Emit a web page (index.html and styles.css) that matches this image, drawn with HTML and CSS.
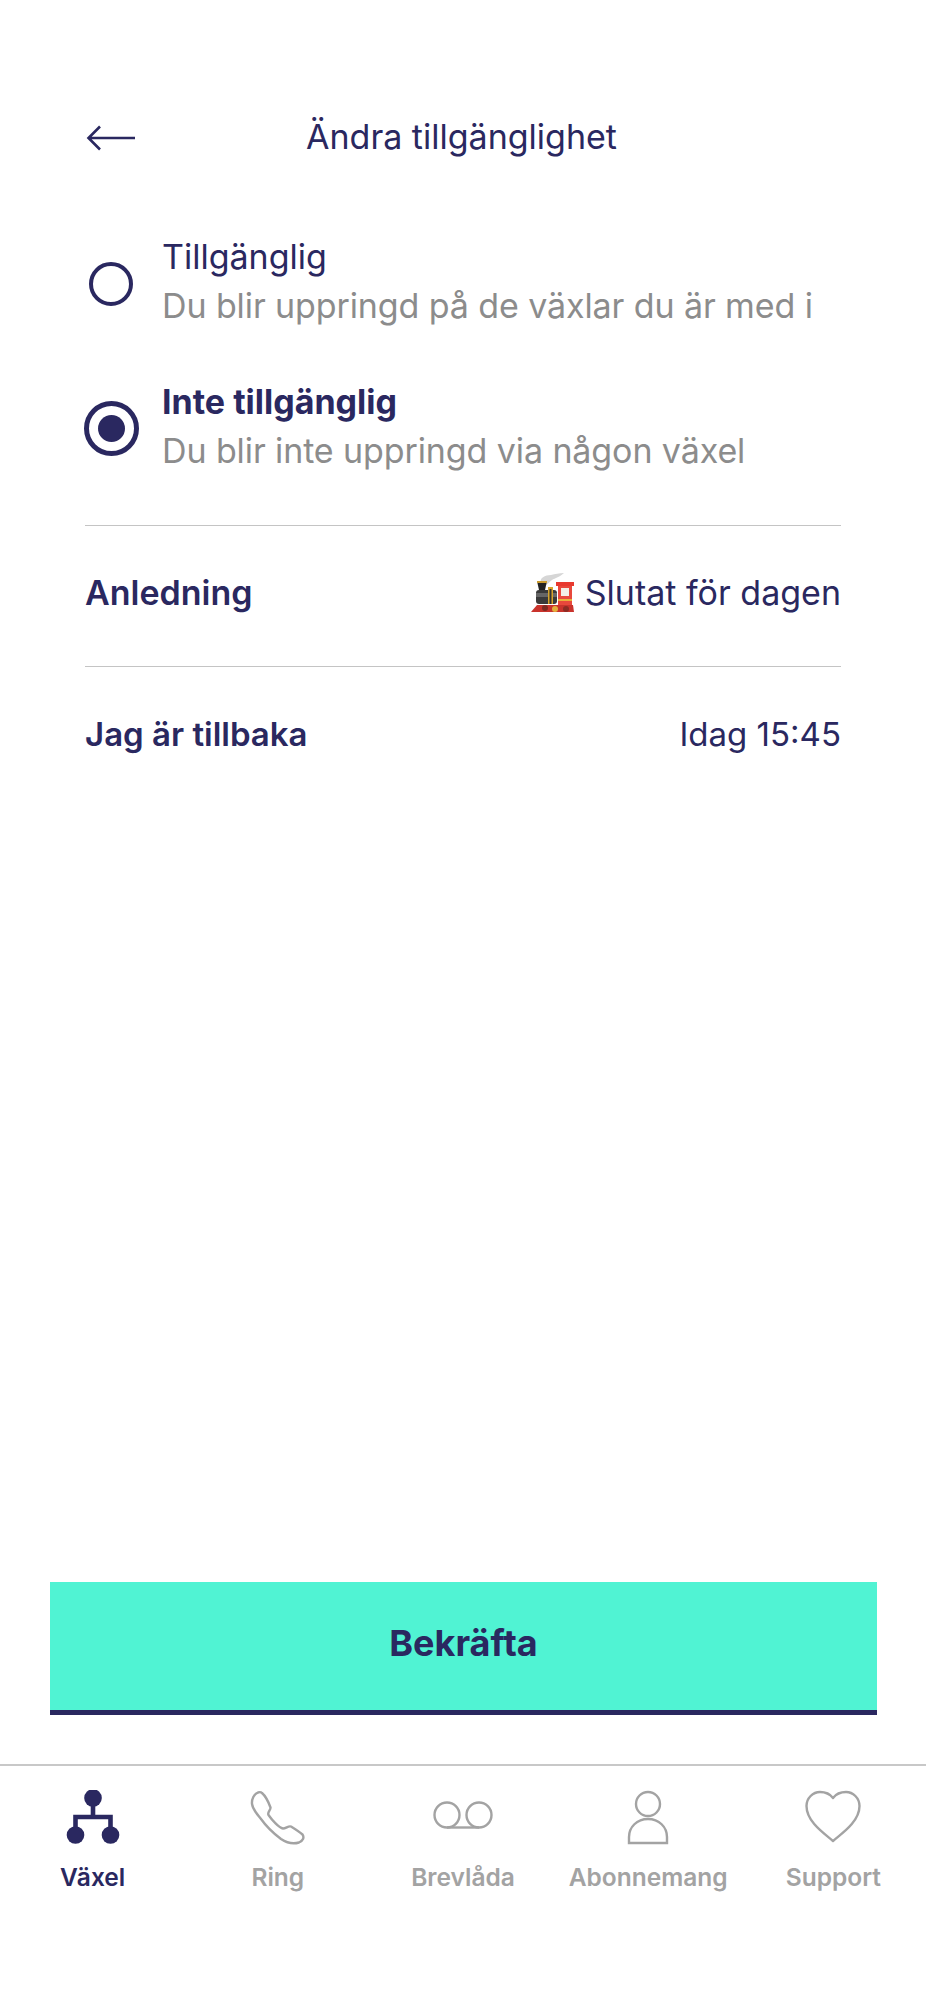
FILE: index.html
```html
<!DOCTYPE html>
<html>
<head>
    <meta charset="UTF-8">
    <title>Ändra tillgänglighet</title>
    <link rel="stylesheet" href="styles.css">
</head>
<body>
    <div class="page">
        <div class="top-bar">
            <svg class="back-icon" width="50" height="26" viewBox="0 0 50 26">
                <path d="M14 1.5 L2.5 13 L14 24.5 M2.5 13 H49" fill="none" stroke="#2a2860" stroke-width="2.6"/>
            </svg>
            <div class="page-title">Ändra tillgänglighet</div>
        </div>

        <div class="options">
            <div class="option option-first">
                <div class="radio-slot"><span class="radio"></span></div>
                <div class="option-text">
                    <div class="option-name">Tillgänglig</div>
                    <div class="option-desc">Du blir uppringd på de växlar du är med i</div>
                </div>
            </div>
            <div class="option">
                <div class="radio-slot"><span class="radio radio-on"></span></div>
                <div class="option-text">
                    <div class="option-name bold">Inte tillgänglig</div>
                    <div class="option-desc">Du blir inte uppringd via någon växel</div>
                </div>
            </div>
        </div>

        <div class="row row-reason">
            <span class="row-label big">Anledning</span>
            <span class="row-value">
                <svg class="train" width="44" height="42" viewBox="0 0 44 42">
                    <path d="M10 11 C8 6 14 3 20 3 C24 2 28 1 33 1 C29 5 24 6 21 8 C18 10 17 12 15 13 Z" fill="#d6d6d6"/>
                    <path d="M6 9 H16 L14 18 H8 Z" fill="#222"/>
                    <rect x="6" y="9" width="10" height="2" fill="#c99a2e"/>
                    <rect x="5" y="18" width="21" height="14" rx="3" fill="#3a3a3a"/>
                    <rect x="5" y="21" width="21" height="4" fill="#666"/>
                    <rect x="17" y="15" width="5" height="17" fill="#d9a52a"/>
                    <rect x="18.5" y="17" width="2" height="15" fill="#333"/>
                    <rect x="25" y="10" width="18" height="4" fill="#e8392f"/>
                    <rect x="27" y="14" width="14" height="21" fill="#e8483c"/>
                    <rect x="30" y="16" width="8" height="8" fill="#f4efe6"/>
                    <rect x="27" y="27" width="14" height="2" fill="#e9b23a"/>
                    <path d="M0 40 L6 33 H42 L43 40 Z" fill="#c9332c"/>
                    <circle cx="14" cy="36" r="3" fill="#7c2a22"/>
                    <circle cx="24" cy="37" r="3" fill="#e4b03c"/>
                    <circle cx="35" cy="37" r="3" fill="#8d2c24"/>
                </svg>
                Slutat för dagen
            </span>
        </div>
        <div class="row row-back">
            <span class="row-label">Jag är tillbaka</span>
            <span class="row-value small">Idag 15:45</span>
        </div>

        <div class="spacer"></div>

        <div class="confirm-wrap">
            <button class="confirm">Bekräfta</button>
        </div>

        <nav class="tabs">
            <div class="tab tab-active">
                <svg width="56" height="56" viewBox="0 0 56 56">
                    <circle cx="28" cy="8" r="8.8" fill="#2a2860"/>
                    <circle cx="10.5" cy="45" r="8.8" fill="#2a2860"/>
                    <circle cx="45.5" cy="45" r="8.8" fill="#2a2860"/>
                    <path d="M28 14 V27 M10.5 40 V27 H45.5 V40" fill="none" stroke="#2a2860" stroke-width="4.6"/>
                </svg>
                <span>Växel</span>
            </div>
            <div class="tab">
                <svg width="56" height="56" viewBox="0 0 56 56">
                    <path d="M8 2.5 C4 4 1.5 9 2 14 C3 20 7 24 11 29 C16 36 23 43 31 49 C37 53 44 54 49 52.5 C53 51 54.5 47.5 52.5 44.5 C49 41.5 45 39 41 36.5 C38.5 35.5 36 38.5 33 38.5 C29 38 22 30 18.5 25 C17 22 21 20 20.5 17.5 C18.5 12 15.5 6 12 3 C11 2 9.5 2 8 2.5 Z" fill="none" stroke="#a3a3a3" stroke-width="2.4" stroke-linejoin="round"/>
                </svg>
                <span>Ring</span>
            </div>
            <div class="tab">
                <svg width="60" height="56" viewBox="0 0 60 56">
                    <g fill="none" stroke="#a3a3a3" stroke-width="2.4">
                        <circle cx="14" cy="25" r="12.5"/>
                        <circle cx="46" cy="25" r="12.5"/>
                        <path d="M14 37.5 H46"/>
                    </g>
                </svg>
                <span>Brevlåda</span>
            </div>
            <div class="tab">
                <svg width="56" height="56" viewBox="0 0 56 56">
                    <g fill="none" stroke="#a3a3a3" stroke-width="2.4">
                        <circle cx="28" cy="14" r="12"/>
                        <path d="M9 53 V47 C9 37 17 29 28 29 C39 29 47 37 47 47 V53 Z"/>
                    </g>
                </svg>
                <span>Abonnemang</span>
            </div>
            <div class="tab">
                <svg width="56" height="56" viewBox="0 0 56 56">
                    <path d="M28 51 C20 44 1.5 32 1.5 16 C1.5 8 8 2 15 2 C20 2 25 4 28 8 C31 4 36 2 41 2 C48 2 54.5 8 54.5 16 C54.5 32 36 44 28 51 Z" fill="none" stroke="#a3a3a3" stroke-width="2.4" stroke-linejoin="round"/>
                </svg>
                <span>Support</span>
            </div>
        </nav>
    </div>
</body>
</html>
```

FILE: styles.css
```css
body {
    margin: 0;
    background-color: #fff;
    font-family: Inter, "Liberation Sans", sans-serif;
    color: #2a2860;
}

.page {
    height: 2012px;
    display: flex;
    flex-direction: column;
    overflow: hidden;
}

.top-bar {
    display: flex;
    align-items: center;
    justify-content: center;
    position: relative;
    height: 44px;
    margin-top: 115px;
}

.back-icon {
    position: absolute;
    left: 86px;
    top: 10px;
}

.page-title {
    font-size: 34px;
    line-height: 44px;
    margin-left: -3px;
}

.options {
    margin: 74px 85px 0 85px;
    padding-bottom: 49px;
    border-bottom: 1px solid #c4c4c4;
}

.option {
    display: flex;
    align-items: center;
    margin-top: 47px;
}

.option-first {
    margin-top: 0;
}

.radio-slot {
    flex: 0 0 52px;
    min-width: 0;
    margin-right: 25px;
    padding-top: 3px;
    display: flex;
    align-items: center;
    justify-content: center;
}

.radio {
    display: block;
    flex: none;
    box-sizing: border-box;
    width: 44px;
    height: 44px;
    border: 4px solid #2a2860;
    border-radius: 50%;
}

.radio-on {
    width: 55px;
    height: 55px;
    border-width: 5px;
    position: relative;
}

.radio-on::after {
    content: "";
    position: absolute;
    left: 9px;
    top: 9px;
    width: 27px;
    height: 27px;
    border-radius: 50%;
    background-color: #2a2860;
}

.option-name {
    font-size: 34px;
    line-height: 48px;
}

.bold {
    font-weight: 700;
}

.option-desc {
    font-size: 34px;
    line-height: 50px;
    letter-spacing: -0.1px;
    color: #8c8c8c;
    white-space: nowrap;
}

.row {
    display: flex;
    justify-content: space-between;
    align-items: center;
    margin: 0 85px;
}

.row-reason {
    height: 133px;
    padding-bottom: 7px;
    border-bottom: 1px solid #c4c4c4;
}

.row-back {
    height: 134px;
}

.row-label {
    font-size: 33px;
    font-weight: 600;
}

.row-label.big {
    font-size: 34px;
}

.row-value {
    display: flex;
    align-items: center;
    gap: 10px;
    font-size: 34px;
}

.row-value.small {
    font-size: 33px;
}

.train {
    display: block;
}

.spacer {
    flex: 1;
}

.confirm-wrap {
    padding: 0 49px 0 50px;
}

.confirm {
    display: block;
    width: 100%;
    height: 133px;
    padding: 0 0 6px;
    background-color: #50f3d3;
    border: 0;
    border-bottom: 5px solid #2a2860;
    border-radius: 0;
    color: #2a2860;
    font-family: inherit;
    font-size: 36px;
    font-weight: 700;
}

.tabs {
    display: grid;
    grid-template-columns: repeat(5, 1fr);
    margin-top: 49px;
    height: 248px;
    border-top: 2px solid #c8c8c8;
    box-sizing: border-box;
    padding-top: 24px;
}

.tab {
    display: flex;
    flex-direction: column;
    align-items: center;
    color: #a3a3a3;
    font-size: 24.5px;
    font-weight: 600;
}

.tab svg {
    display: block;
    margin-bottom: 16px;
}

.tab-active {
    color: #2a2860;
}
```
